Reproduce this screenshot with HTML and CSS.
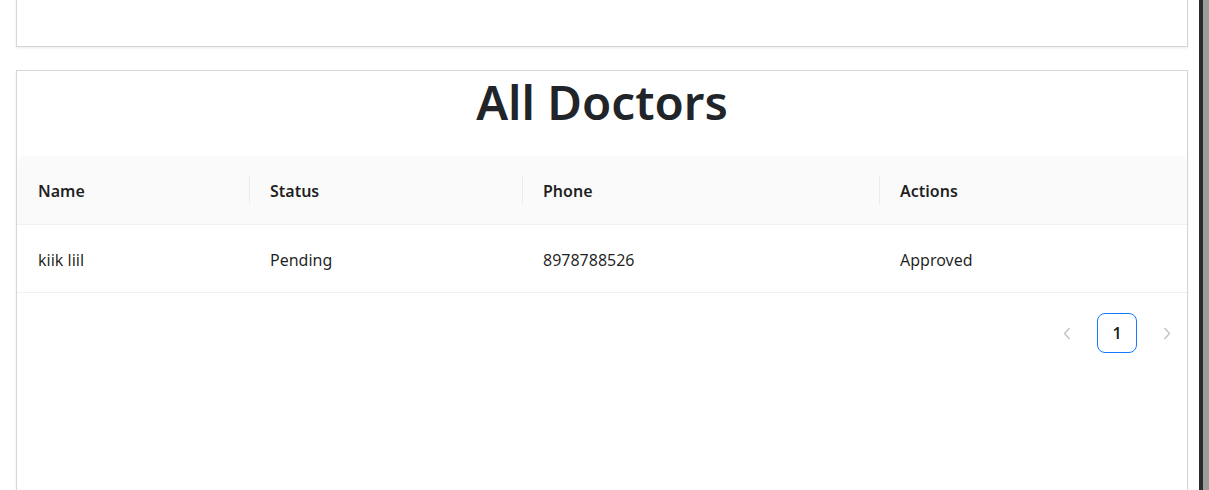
FILE: index.html
```html
<!DOCTYPE html>
<html lang="en">
<head>
<meta charset="utf-8">
<title>All Doctors</title>
<link rel="stylesheet" href="styles.css">
</head>
<body>
<div class="page">
  <section class="card card-top"></section>
  <section class="card card-main">
    <h1 class="title">All Doctors</h1>
    <table class="table">
      <colgroup>
        <col class="c1"><col class="c2"><col class="c3"><col class="c4">
      </colgroup>
      <thead>
        <tr>
          <th>Name</th>
          <th class="sep">Status</th>
          <th class="sep">Phone</th>
          <th class="sep">Actions</th>
        </tr>
      </thead>
      <tbody>
        <tr>
          <td>kiik liil</td>
          <td>Pending</td>
          <td>8978788526</td>
          <td>Approved</td>
        </tr>
      </tbody>
    </table>
    <nav class="pager">
      <span class="pg-arrow" aria-label="Previous">
        <svg width="8" height="13" viewBox="0 0 8 13"><path d="M6.5 1 L1.5 6.5 L6.5 12" fill="none" stroke="#bfbfbf" stroke-width="1.3"/></svg>
      </span>
      <span class="pg-item active">1</span>
      <span class="pg-arrow" aria-label="Next">
        <svg width="8" height="13" viewBox="0 0 8 13"><path d="M1.5 1 L6.5 6.5 L1.5 12" fill="none" stroke="#bfbfbf" stroke-width="1.3"/></svg>
      </span>
    </nav>
  </section>
</div>
<div class="scroll-strip"></div>
</body>
</html>
```
FILE: styles.css
```css
html, body {
  margin: 0;
  height: 490px;
  overflow: hidden;
  background: #ffffff;
}
body {
  font-family: "Noto Sans", "Open Sans", sans-serif;
  color: rgba(0, 0, 0, 0.88);
}
.page {
  display: flex;
  flex-direction: column;
  gap: 23px;
  width: 1172px;
  padding-left: 16px;
}
.card {
  background: #fff;
  border: 1px solid #d6d6d6;
  box-shadow: 0 1px 2px rgba(0, 0, 0, 0.08);
  box-sizing: border-box;
}
.card-top {
  height: 100px;
  margin-top: -53px;
}
.card-main {
  height: 600px;
}
.title {
  margin: 0;
  height: 85px;
  text-align: center;
  font-size: 47.5px;
  line-height: 62px;
  padding-top: 0;
  box-sizing: border-box;
  font-weight: 600;
  color: #212529;
}
.table {
  width: 1170px;
  border-collapse: separate;
  border-spacing: 0;
  table-layout: fixed;
  font-size: 16px;
}
.c1 { width: 232px; }
.c2 { width: 273px; }
.c3 { width: 357px; }
.c4 { width: 308px; }
.table th, .table td {
  text-align: left;
  line-height: 26px;
  border-bottom: 1px solid #f0f0f0;
}
.table th {
  padding: 22px 20px 20px 21px;
  background: #fafafa;
  font-weight: 600;
  color: rgba(0, 0, 0, 0.88);
  position: relative;
}
.table td {
  padding: 22px 20px 19px 21px;
  font-weight: 400;
}
.table th:first-child {
  border-top-left-radius: 8px;
}
.table th:last-child {
  border-top-right-radius: 8px;
}
.table th.sep::before {
  content: "";
  position: absolute;
  left: 0;
  top: 50%;
  width: 1px;
  height: 28px;
  transform: translateY(-50%);
  background: rgba(0, 0, 0, 0.06);
}
.pager {
  display: flex;
  justify-content: flex-end;
  align-items: center;
  gap: 10px;
  margin-top: 20px;
  padding-right: 0;
}
.pg-arrow {
  width: 40px;
  height: 40px;
  display: flex;
  align-items: center;
  justify-content: center;
}
.pg-item {
  width: 40px;
  height: 40px;
  box-sizing: border-box;
  display: flex;
  align-items: center;
  justify-content: center;
  border: 1px solid #1677ff;
  border-radius: 8px;
  font-weight: 600;
  font-size: 16px;
  color: rgba(0, 0, 0, 0.88);
}
.scroll-strip {
  position: fixed;
  top: 0;
  right: 0;
  bottom: 0;
  width: 10px;
  background: linear-gradient(to right, #2b2b2b 0 4px, #9c9c9c 4px 10px);
}
```
